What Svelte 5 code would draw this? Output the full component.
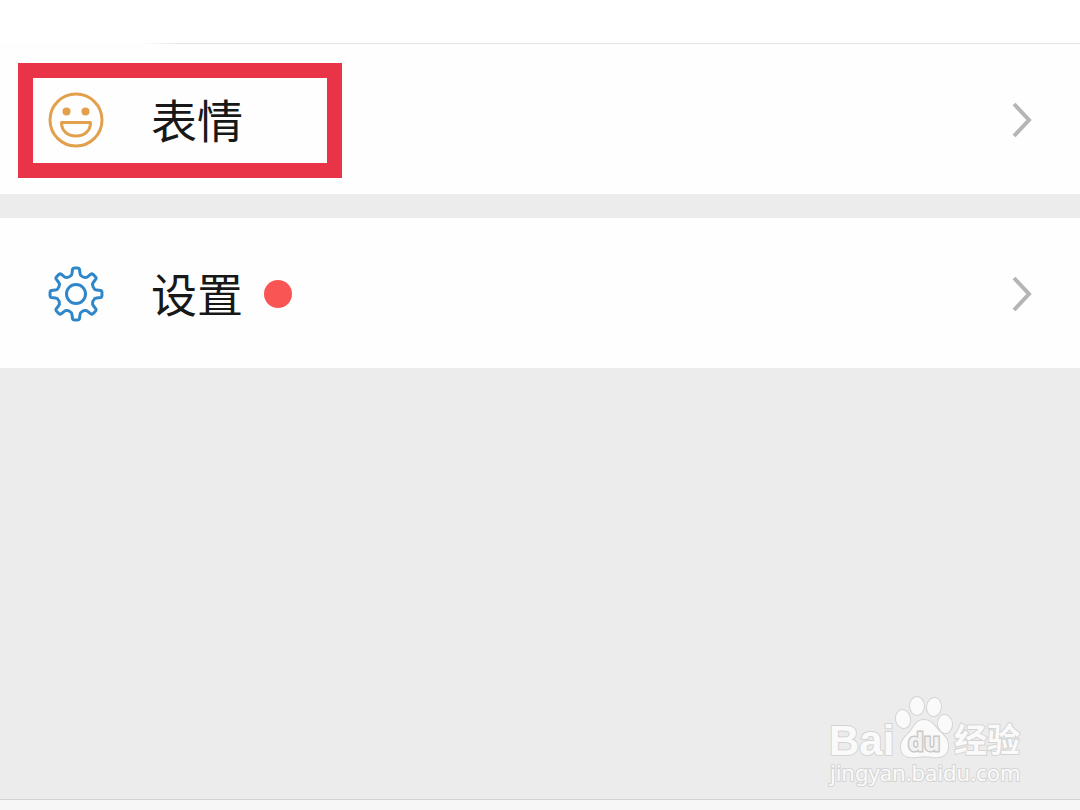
<script lang="ts">
  const items = [
    { id: "stickers", label: "表情", marked: true, unread: false },
    { id: "settings", label: "设置", marked: false, unread: true },
  ];

  // Outline of a cog with eight teeth, centred on 0,0.
  function cogPath() {
    const at = (radius: number, deg: number) => {
      const a = (deg * Math.PI) / 180;
      return `${(radius * Math.sin(a)).toFixed(2)} ${(-radius * Math.cos(a)).toFixed(2)}`;
    };

    let d = `M${at(19, -16)}`;
    for (let deg = 0; deg < 360; deg += 45) {
      d += `Q${at(19, deg - 13)} ${at(21, deg - 11)}`;
      d += `L${at(25, deg - 8)}Q${at(26, deg - 7)} ${at(26, deg - 4)}`;
      d += `L${at(26, deg + 4)}Q${at(26, deg + 7)} ${at(25, deg + 8)}`;
      d += `L${at(21, deg + 11)}Q${at(19, deg + 13)} ${at(19, deg + 16)}`;
      d += `Q${at(18, deg + 22.5)} ${at(19, deg + 29)}`;
    }
    return d + "Z";
  }

  const cog = cogPath();
</script>

<main>
  <nav>
    {#each items as item (item.id)}
      <a class="row" href="#{item.id}">
        <svg class="icon" viewBox="-28 -28 56 56" aria-hidden="true">
          {#if item.id === "stickers"}
            <g fill="none" stroke="#e2a04c" stroke-width="3">
              <circle r="26" />
              <path
                d="M-14.5 2.500H14.500C14.500 11 8.500 16 0 16S-14.500 11-14.500 2.500Z"
                stroke-linejoin="round"
              />
            </g>
            <g fill="#e2a04c">
              <circle cx="-9.500" cy="-8.500" r="4" />
              <circle cx="9.500" cy="-8.500" r="4" />
            </g>
          {:else}
            <g fill="none" stroke="#2f86c8" stroke-width="3">
              <path d={cog} stroke-linejoin="round" />
              <circle r="9.500" />
            </g>
          {/if}
        </svg>
        <span class="label">{item.label}</span>
        {#if item.unread}
          <span class="dot"></span>
        {/if}
        <svg class="chevron" viewBox="0 0 20 36" aria-hidden="true">
          <path d="M2 2L17 18L2 34" fill="none" stroke="#b5b5b5" stroke-width="4" />
        </svg>
        {#if item.marked}
          <span class="marker"></span>
        {/if}
      </a>
    {/each}
  </nav>

  <footer>
    <svg class="watermark" viewBox="0 0 200 100" role="img" aria-label="Baidu 经验">
      <g fill="#fafafa" stroke="#d4d4d4" stroke-width="2" paint-order="stroke">
        <text class="brand" x="3" y="64">Bai</text>
        <text class="brand-cn" x="128" y="61">经验</text>
        <ellipse cx="77" cy="28" rx="7" ry="9" transform="rotate(-12 77 28)" />
        <ellipse cx="91" cy="15" rx="7" ry="9" />
        <ellipse cx="108" cy="16" rx="7" ry="9" transform="rotate(8 108 16)" />
        <ellipse cx="119" cy="33" rx="7" ry="9" transform="rotate(-8 119 33)" />
        <path
          d="M98 29C106 29 109 36 114 41C120 46 123 50 122 57C121 66 113 67 106 66C101 65 96 65 91 66C83 67 75 66 75 56C75 49 80 45 84 41C88 36 90 29 98 29Z"
        />
        <text class="site" x="4" y="90">jingyan.baidu.com</text>
      </g>
      <text class="paw-text" x="82" y="60">du</text>
    </svg>
  </footer>
</main>

<style>
  :global(body) {
    margin: 0;
  }

  main {
    display: flex;
    flex-direction: column;
    box-sizing: border-box;
    min-height: 100vh;
    padding-top: 43px;
    background: linear-gradient(#fff, #fff) top / 100% 43px no-repeat #ececec;
    font-family: "Noto Sans CJK SC", sans-serif;
  }

  nav {
    display: grid;
    gap: 24px;
    background: #ececed;
  }

  .row {
    position: relative;
    display: flex;
    align-items: center;
    box-sizing: border-box;
    height: 150px;
    padding: 2px 48px 0;
    background: #fefefe;
    color: #181818;
    text-decoration: none;
  }

  .row:first-child {
    height: 151px;
    background: linear-gradient(90deg, #fefefe 140px, #e6e6e6 180px) top / 100% 1px
      no-repeat #fefefe;
  }

  .icon {
    width: 56px;
    height: 56px;
  }

  .label {
    margin-left: 47px;
    padding-bottom: 4px;
    font-size: 46px;
    line-height: 64px;
  }

  .dot {
    width: 28px;
    height: 28px;
    margin-left: 21px;
    border-radius: 50%;
    background: #fa5555;
  }

  .chevron {
    width: 20px;
    height: 36px;
    margin-left: auto;
  }

  .marker {
    position: absolute;
    top: 20px;
    left: 18px;
    box-sizing: border-box;
    width: 324px;
    height: 115px;
    border: 15px solid #e93448;
  }

  footer {
    display: flex;
    justify-content: flex-end;
    margin-top: auto;
    padding: 0 54px 9px 0;
    border-bottom: 10px solid #f7f7f7;
    box-shadow: inset 0 -1px #d2d2d2;
  }

  .watermark {
    width: 200px;
    height: 100px;
  }

  .brand {
    font: bold 42px "Liberation Sans", sans-serif;
  }

  .brand-cn {
    font: bold 33px "Noto Sans CJK SC", sans-serif;
  }

  .site {
    font: 22px "Noto Sans", sans-serif;
  }

  .paw-text {
    fill: #f2f2f2;
    stroke: #c8c8c8;
    stroke-width: 3px;
    paint-order: stroke;
    font: bold 25px "Open Sans", sans-serif;
  }
</style>
